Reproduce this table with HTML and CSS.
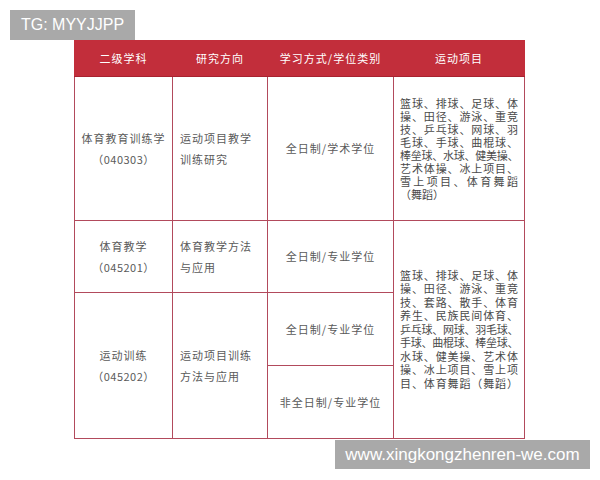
FILE: index.html
```html
<!DOCTYPE html>
<html lang="zh-CN">
<head>
<meta charset="utf-8">
<title>学科表</title>
<link rel="stylesheet" href="styles.css">
</head>
<body>
<div class="page">
  <table class="grid">
    <colgroup>
      <col class="c1"><col class="c2"><col class="c3"><col class="c4">
    </colgroup>
    <thead>
      <tr class="head">
        <th>二级学科</th>
        <th>研究方向</th>
        <th>学习方式/学位类别</th>
        <th>运动项目</th>
      </tr>
    </thead>
    <tbody>
      <tr class="r1">
        <td class="name"><div>体育教育训练学</div><div class="code">（040303）</div></td>
        <td class="dir"><div>运动项目教学</div><div>训练研究</div></td>
        <td class="mode">全日制/学术学位</td>
        <td class="sports a">
          <span class="ln">篮球、排球、足球、体</span>
          <span class="ln">操、田径、游泳、重竞</span>
          <span class="ln">技、乒乓球、网球、羽</span>
          <span class="ln">毛球、手球、曲棍球、</span>
          <span class="ln tight">棒垒球、水球、健美操、</span>
          <span class="ln">艺术体操、冰上项目、</span>
          <span class="ln">雪上项目、体育舞蹈</span>
          <span class="ln last">（舞蹈）</span>
        </td>
      </tr>
      <tr class="r2">
        <td class="name"><div>体育教学</div><div class="code">（045201）</div></td>
        <td class="dir"><div>体育教学方法</div><div>与应用</div></td>
        <td class="mode">全日制/专业学位</td>
        <td class="sports b" rowspan="3">
          <span class="ln">篮球、排球、足球、体</span>
          <span class="ln">操、田径、游泳、重竞</span>
          <span class="ln">技、套路、散手、体育</span>
          <span class="ln">养生、民族民间体育、</span>
          <span class="ln tight">乒乓球、网球、羽毛球、</span>
          <span class="ln tight">手球、曲棍球、棒垒球、</span>
          <span class="ln">水球、健美操、艺术体</span>
          <span class="ln">操、冰上项目、雪上项</span>
          <span class="ln">目、体育舞蹈（舞蹈）</span>
        </td>
      </tr>
      <tr class="r3">
        <td class="name" rowspan="2"><div>运动训练</div><div class="code">（045202）</div></td>
        <td class="dir" rowspan="2"><div>运动项目训练</div><div>方法与应用</div></td>
        <td class="mode">全日制/专业学位</td>
      </tr>
      <tr class="r4">
        <td class="mode">非全日制/专业学位</td>
      </tr>
    </tbody>
  </table>
  <div class="mark mark-tl">TG: MYYJJPP</div>
  <div class="mark mark-br">www.xingkongzhenren-we.com</div>
</div>
</body>
</html>
```
FILE: styles.css
```css
html, body {
  margin: 0;
  padding: 0;
  background: #ffffff;
}
.page {
  position: relative;
  width: 600px;
  height: 480px;
  padding: 40px 0 0 74px;
  box-sizing: border-box;
  font-family: "Noto Sans CJK SC", "Noto Sans", sans-serif;
}
.grid {
  border-collapse: collapse;
  table-layout: fixed;
  width: 450px;
}
.c1 { width: 98px; }
.c2 { width: 95px; }
.c3 { width: 126px; }
.c4 { width: 131px; }
.grid th, .grid td {
  border: 1px solid #b24a5c;
  padding: 0;
  vertical-align: middle;
}
.head { height: 36px; }
.grid .head th {
  background: #c22e3b;
  border-color: #c22e3b;
  border-bottom-color: #a8222f;
  color: #ffffff;
  font-weight: normal;
  font-size: 11px;
  letter-spacing: 1px;
  text-align: center;
  padding-bottom: 2px;
}
.r1 { height: 144px; }
.r2 { height: 72px; }
.r3 { height: 73px; }
.r4 { height: 73px; }
.grid td {
  color: #5a5a5a;
  font-size: 11px;
  letter-spacing: 1px;
  line-height: 21px;
}
.grid td.name { text-align: center; }
.grid td.name .code { letter-spacing: 0.5px; }
.grid td.dir { text-align: left; padding-left: 7px; }
.grid td.mode { text-align: center; }
.grid td.sports {
  padding: 0 6px;
  letter-spacing: 0;
  color: #4a4a4a;
}
.sports .ln {
  display: block;
  white-space: nowrap;
  text-align: justify;
  text-align-last: justify;
  font-size: 11px;
}
.sports.a .ln { line-height: 13px; }
.sports.b .ln { line-height: 13.5px; }
.sports .ln.tight { letter-spacing: -0.4px; }
.sports .ln.last { text-align-last: left; }
.mark {
  position: absolute;
  background: #a9a9a9;
  color: #ffffff;
  font-family: "Liberation Sans", Arial, sans-serif;
  display: flex;
  align-items: center;
  justify-content: center;
}
.mark-tl {
  left: 10px;
  top: 10px;
  width: 125px;
  height: 30px;
  font-size: 16px;
}
.mark-br {
  left: 335px;
  top: 440px;
  width: 255px;
  height: 29px;
  font-size: 17px;
}
```
